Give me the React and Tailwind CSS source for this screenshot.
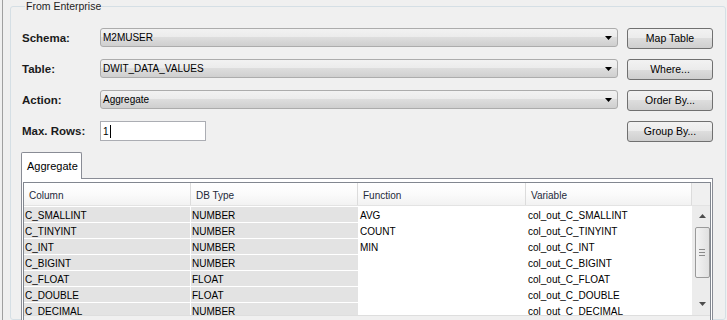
import React from "react";

const fields = [
  { label: "Schema:", value: "M2MUSER", button: "Map Table" },
  { label: "Table:", value: "DWIT_DATA_VALUES", button: "Where..." },
  { label: "Action:", value: "Aggregate", button: "Order By..." },
];

const columns = [
  ["Column", "w-[167px]"],
  ["DB Type", "w-[167px]"],
  ["Function", "w-[168px]"],
  ["Variable", "w-[166px]"],
];

const rows = [
  ["C_SMALLINT", "NUMBER", "AVG", "col_out_C_SMALLINT"],
  ["C_TINYINT", "NUMBER", "COUNT", "col_out_C_TINYINT"],
  ["C_INT", "NUMBER", "MIN", "col_out_C_INT"],
  ["C_BIGINT", "NUMBER", "", "col_out_C_BIGINT"],
  ["C_FLOAT", "FLOAT", "", "col_out_C_FLOAT"],
  ["C_DOUBLE", "FLOAT", "", "col_out_C_DOUBLE"],
  ["C_DECIMAL", "NUMBER", "", "col_out_C_DECIMAL"],
];

function ComboBox({ value }) {
  return (
    <div className="flex h-[19px] w-[518px] items-center justify-between self-start rounded-[3px] border border-[#acacac] bg-[linear-gradient(#f2f2f2_0%,#ebebeb_50%,#dddddd_50%,#cfcfcf_100%)] pl-[2px] pr-[5px] text-[10px] text-black">
      <span>{value}</span>
      <svg width="7" height="4" viewBox="0 0 7 4">
        <path d="M0 0h7L3.5 4z" fill="#000" />
      </svg>
    </div>
  );
}

function Button({ children }) {
  return (
    <button
      className="ml-[9px] flex h-[21px] w-[86px] items-center justify-center rounded-[3px] border border-[#707070] bg-[linear-gradient(#f2f2f2_0%,#ebebeb_50%,#dddddd_50%,#cfcfcf_100%)] text-[10.5px] text-black"
      type="button"
    >
      {children}
    </button>
  );
}

function Label({ children }) {
  return <span className="w-[78px] text-[11.5px] font-bold text-[#1b1b1b]">{children}</span>;
}

function Arrow({ down }) {
  return (
    <svg width="7" height="4" viewBox="0 0 7 4">
      <path d={down ? "M0 0h7L3.5 4z" : "M0 4h7L3.5 0z"} fill="#4d4d4d" />
    </svg>
  );
}

function ScrollBar() {
  return (
    <div className="flex h-full w-[19px] flex-col items-center bg-[#ececec] pl-[2px]">
      <div className="flex h-[20px] items-center">
        <Arrow />
      </div>
      <div className="mt-[1px] flex h-[51px] w-[15px] flex-col items-center justify-center gap-[2px] rounded-[2px] border border-[#9a9a9a] bg-[linear-gradient(90deg,#f3f3f3,#e0e0e0)]">
        <span className="h-px w-[6px] bg-[#8a8a8a]" />
        <span className="h-px w-[6px] bg-[#8a8a8a]" />
        <span className="h-px w-[6px] bg-[#8a8a8a]" />
      </div>
      <div className="flex flex-1 items-end pb-[9px]">
        <Arrow down />
      </div>
    </div>
  );
}

function GridTable() {
  return (
    <div className="border border-[#828790] bg-white">
      <div className="flex h-[23px] border-b border-[#e3e3e3]">
        {columns.map(([name, width]) => (
          <div
            className={`${width} flex items-center border-r border-[#dcdcdc] bg-[linear-gradient(#ffffff_0%,#fbfbfb_50%,#f2f2f2_100%)] pt-[3px] pl-[5px] text-[10px] text-[#1e2a3a]`}
            key={name}
          >
            {name}
          </div>
        ))}
        <div className="flex-1 bg-[#f0f0f0]" />
      </div>
      <div className="flex h-[109px] overflow-hidden">
        <div className="flex flex-col">
          {rows.map(([col, type, fn, variable]) => (
            <div className="flex h-[16px] shrink-0 text-[10px] text-black" key={col}>
              <div className="flex w-[167px] items-center border-t border-r border-white bg-[#e3e3e3] pt-[1px] pl-[1px]">
                {col}
              </div>
              <div className="flex w-[167px] items-center border-t border-white bg-[#e3e3e3] pt-[1px] pl-[1px]">
                {type}
              </div>
              <div className="flex w-[168px] items-center bg-white pt-[2px] pl-[2px]">{fn}</div>
              <div className="flex w-[166px] items-center bg-white pt-[2px] pl-[2px]">{variable}</div>
            </div>
          ))}
        </div>
        <ScrollBar />
      </div>
      <div className="h-[20px] border-t border-[#dedede] bg-[#f0f0f0]" />
    </div>
  );
}

export default function App() {
  return (
    <div className="h-[320px] w-[727px] overflow-hidden bg-[#f0f0f0] font-['Liberation_Sans',Arial,sans-serif] text-black">
      <div className="flex h-full">
        <div className="ml-[2px] w-px shrink-0 bg-[#a0a0a0]" />
        <fieldset className="mr-[1px] ml-[7px] min-w-0 flex-1 rounded-[3px] border border-[#d5dfe5] pt-[15px] pr-[12px] pl-[10px]">
          <legend className="ml-[4px] px-[1px] text-[10.5px] leading-[13px] text-[#1e1e1e]">
            From Enterprise
          </legend>

          <div className="flex flex-col gap-[10px] pl-[1px]">
            {fields.map((field) => (
              <div className="flex h-[21px] items-center" key={field.label}>
                <Label>{field.label}</Label>
                <ComboBox value={field.value} />
                <Button>{field.button}</Button>
              </div>
            ))}
            <div className="flex h-[21px] items-center">
              <Label>Max. Rows:</Label>
              <div className="flex h-[20px] w-[106px] items-center self-start border border-[#abadb3] bg-white pl-[2px] text-[10px]">
                <span>1</span>
                <span className="ml-[1px] h-[13px] w-px bg-black" />
              </div>
              <div className="flex-1" />
              <Button>Group By...</Button>
            </div>
          </div>

          <div className="mt-[10px]">
            <div className="relative z-10 -mb-px flex h-[27px] w-[61px] items-center rounded-t-[2px] border border-b-0 border-[#898c95] bg-white pl-[5px] text-[11px] text-black">
              Aggregate
            </div>
            <div className="border border-[#898c95] bg-white px-[1px] pt-[3px]">
              <GridTable />
            </div>
          </div>
        </fieldset>
      </div>
    </div>
  );
}
